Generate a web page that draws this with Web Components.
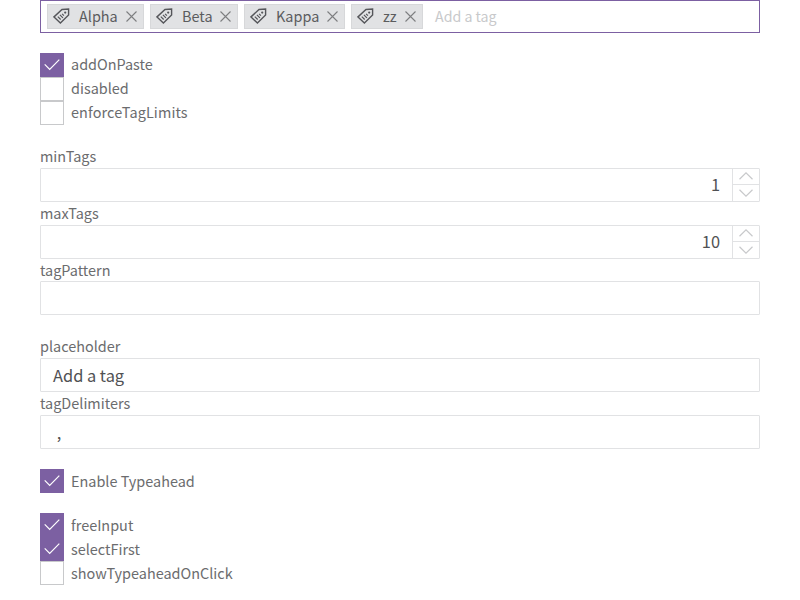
<!DOCTYPE html>
<html lang="en"><head><meta charset="utf-8"><title>Tag input options</title>
<style>
html,body{margin:0;background:#fff}
body{font-family:"Noto Sans CJK SC","Noto Sans",sans-serif;font-size:14.45px;color:#6b6c6e;height:600px;overflow:hidden}
</style></head><body>
<options-page></options-page>
<script>
const define=(name,html,setup)=>customElements.define(name,class extends HTMLElement{
  connectedCallback(){
    if(this.shadowRoot)return;
    const t=document.createElement('template');t.innerHTML=html;
    this.attachShadow({mode:'open'}).append(t.content.cloneNode(true));
    if(setup)setup(this,this.shadowRoot);
  }
});
define('tag-chip',`<style>
:host{display:flex;box-sizing:border-box;height:25px;border:1px solid #d7d8da;background:#e1e2e4;align-items:center;padding:0 6px 0 5px;color:#5b5c5e;line-height:23px;white-space:nowrap}
svg{display:block;flex:none}.icon{margin-right:9px}.text{flex:1}.text span{display:block;margin-top:-2px}
</style><svg class="icon" width="17" height="17" viewBox="0 0 17 17" fill="none" stroke="#55565a" stroke-width="1.4"><path d="M9 1.5L15.6 1V7L7.4 15L1 8.9Z"/><circle cx="12.2" cy="4.6" r="1.1" fill="#55565a" stroke="none"/><path d="M4.8 8.6l2.9 2.9M6.9 6.8l3 3M9.1 5.9l1.8 1.8" stroke-width="1.2"/></svg><div class="text"><span><slot></slot></span></div><svg width="11" height="11" viewBox="0 0 11 11" stroke="#7d7e80" stroke-width="1.1"><path d="M.5 .5l10 10M10.500 .5L.5 10.500"/></svg>`);
define('tag-field',`<style>
:host{display:flex;box-sizing:border-box;height:33px;border:1px solid #7c60a2;padding:3px 6px;gap:6px;align-items:flex-start}
.hint{color:#c8c9cb;line-height:25px;margin-left:6px;font-size:14.2px}
</style><slot></slot><span class="hint">Add a tag</span>`);
define('check-option',`<style>
:host{display:flex;height:24px;align-items:center;gap:7px;line-height:24px}
i{box-sizing:border-box;width:24px;height:24px;border:1px solid #c8c9cb;background:#fff;display:block}
svg{display:none}
:host([checked]) i{border:0;background:#7c60a2}
:host([checked]) svg{display:block}
span{margin-top:var(--label-shift,-1px)}
</style><i><svg width="24" height="24" fill="none" stroke="#fff" stroke-width="1.2"><path d="M4.7 11.3l5 5L19.3 6.6"/></svg></i><span><slot></slot></span>`);
define('option-group',`<style>:host{display:flex;flex-direction:column;margin-top:20px}</style><slot></slot>`);
define('text-option',`<style>
:host{display:block}
label{display:block;height:var(--label-height,23px);line-height:22px}
label span{display:block}
.box{display:flex;box-sizing:border-box;height:34px;border:1px solid #e1e2e4;border-radius:1px;font-size:16.4px;color:#505153;line-height:32px}
.value{flex:1;padding:0 12px;white-space:pre}
.spin{display:none;width:26px;border-left:1px solid #e1e2e4;flex-direction:column}
.spin div{display:flex;justify-content:center;align-items:center;height:15px}
.spin div+div{height:16px;border-top:1px solid #e1e2e4}
:host([numeric]) .spin{display:flex}:host([numeric]) .value{text-align:right;line-height:30px}
.spin svg{margin-top:-1px}
</style><label><span class="name"></span></label><div class="box"><div class="value"></div><div class="spin"><div><svg width="14" height="8" fill="none" stroke="#c8c9cb" stroke-width="1.2"><path d="M.5 7.2L7 .9l6.5 6.3"/></svg></div><div><svg width="14" height="8" fill="none" stroke="#c8c9cb" stroke-width="1.2"><path d="M.5 .8L7 7.1 13.5 .8"/></svg></div></div></div>`,(el,root)=>{
  root.querySelector('.name').textContent=el.getAttribute('name');
  root.querySelector('.value').textContent=el.getAttribute('value')||'';
});
define('options-page',`<style>:host{display:block;padding:0 40px}.short{--label-height:22px}.basic{--label-shift:-3px}.wide{letter-spacing:.1px}</style>
<tag-field><tag-chip style="width:97px">Alpha</tag-chip><tag-chip style="width:88px">Beta</tag-chip><tag-chip style="width:101px">Kappa</tag-chip><tag-chip style="width:72px">zz</tag-chip></tag-field>
<option-group class="basic"><check-option checked>addOnPaste</check-option><check-option>disabled</check-option><check-option class="wide">enforceTagLimits</check-option></option-group>
<option-group><text-option name="minTags" value="1" numeric></text-option><text-option name="maxTags" value="10" numeric></text-option><text-option class="short" name="tagPattern"></text-option></option-group>
<option-group><text-option name="placeholder" value="Add a tag"></text-option><text-option name="tagDelimiters" value=" ,"></text-option></option-group>
<option-group><check-option checked>Enable Typeahead</check-option></option-group>
<option-group><check-option checked>freeInput</check-option><check-option checked>selectFirst</check-option><check-option>showTypeaheadOnClick</check-option></option-group>`);
</script></body></html>
